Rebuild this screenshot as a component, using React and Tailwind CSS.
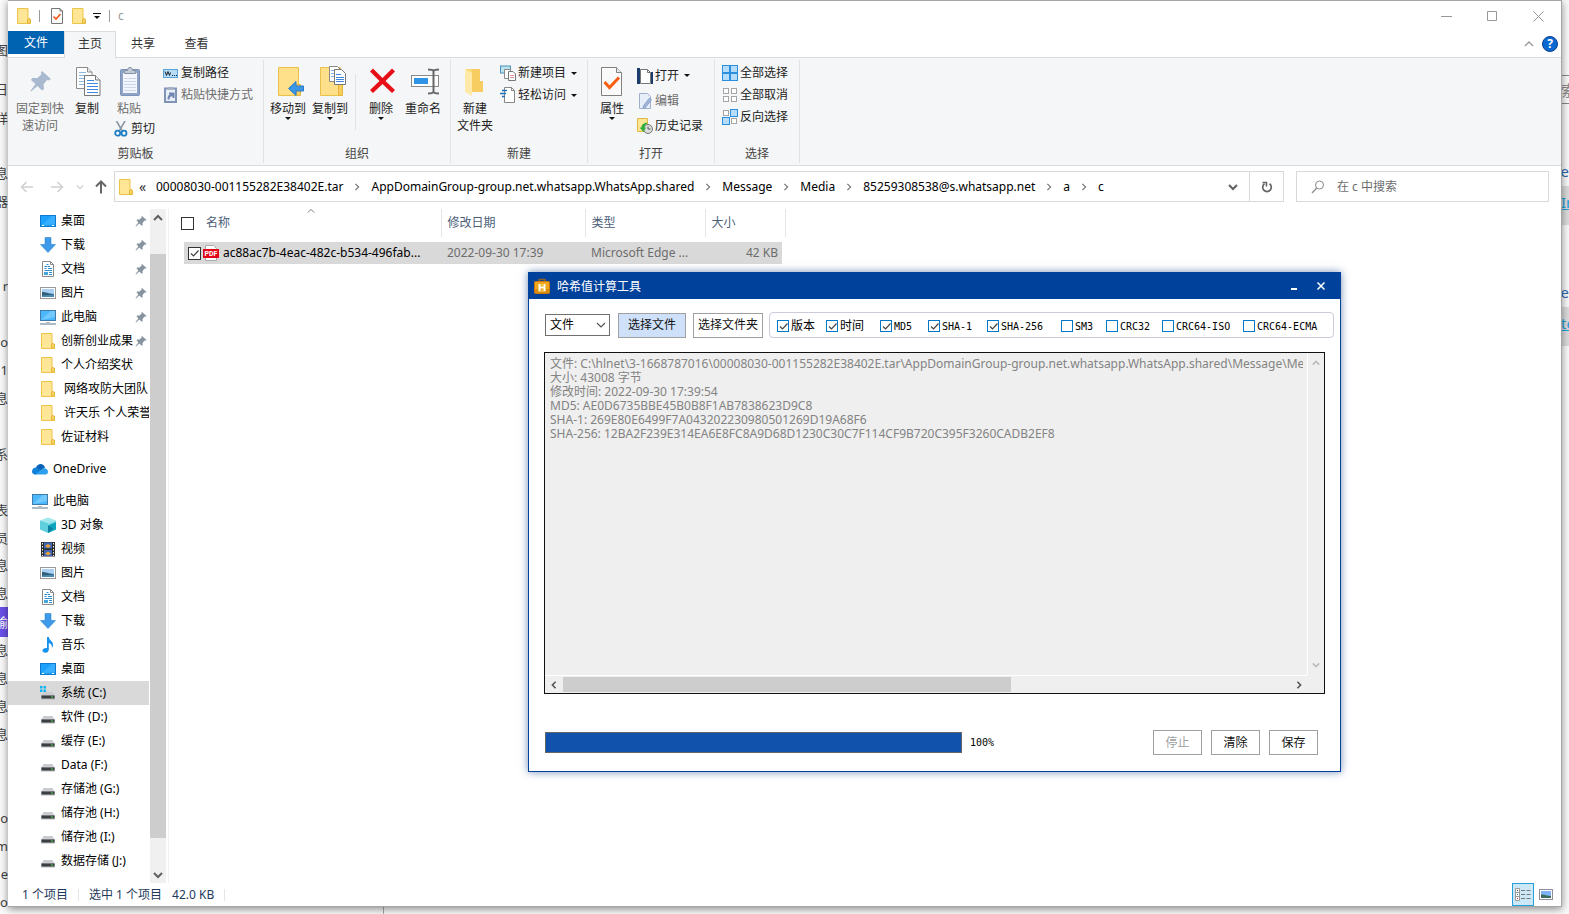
import React from "react";

/* ---------- icons ---------- */

const Folder = ({ className = "w-4 h-4" }) => (
  <svg className={className} viewBox="0 0 16 16">
    <path d="M1.5 .5h10.500v10.200h1c.8 0 1.500.5 1.500 1.200v3.600h-13z" fill="#ffe596" stroke="#ecc448" />
    <path d="M11.500 15.200v-3.600c0-.6.5-1 1.300-1s1.500.4 1.500 1.200v3.400z" fill="#fbd768" stroke="#e3b437" />
  </svg>
);
const DocCheck = ({ className = "w-4 h-4" }) => (
  <svg className={className} viewBox="0 0 16 16">
    <path d="M2.500 .5h8.500l2.500 2.500v12.500h-11z" fill="#fbfbfb" stroke="#777" />
    <path d="M11 .5v2.500h2.500" fill="none" stroke="#777" />
    <path d="M4.500 8.500l2.500 2.500 4.500-5" fill="none" stroke="#f25a1d" strokeWidth="1.700" />
  </svg>
);
const Chevron = ({ dir = "down", className = "w-2.5 h-2.5", color = "#606060", width = 2 }) => {
  const d = {
    down: "M1 3l4 4 4-4",
    up: "M1 7l4-4 4 4",
    right: "M3 1l4 4-4 4",
    left: "M7 1l-4 4 4 4",
  }[dir];
  return (
    <svg className={className} viewBox="0 0 10 10">
      <path d={d} fill="none" stroke={color} strokeWidth={width} />
    </svg>
  );
};
const Caret = () => (
  <svg className="h-[3px] w-[6px] shrink-0" viewBox="0 0 6 3">
    <path d="M0 0h6L3 3z" fill="#111" />
  </svg>
);
const PinBig = () => (
  <svg className="h-8 w-8" viewBox="-1 0 32 32">
    <path d="M17 5l9 8-2.500 1.500-1.500-.5-3.500 4.500.5 4.500-2 1.500-4.500-4.500-6.500 5.500-.5-.8 5-6.700-4.500-4 1.500-2.200 4.700.5 4.300-4-.8-1.300z" fill="#a9b9cf" />
  </svg>
);
const CopyBig = () => (
  <svg className="h-8 w-8" viewBox="-1 0 32 32">
    <path d="M4.500 1.500h11l4.500 4.500v16.500h-15.500z" fill="#fff" stroke="#8b8b8b" />
    <path d="M15.500 1.500v4.500h4.500" fill="#eee" stroke="#8b8b8b" />
    <path d="M7 6.500h7M7 9.500h10M7 12.500h5M7 15.500h5M7 18.500h5" stroke="#8cb6e6" />
    <path d="M12.500 9.500h11l4.500 4.500v15.500h-15.500z" fill="#fff" stroke="#777" />
    <path d="M23.500 9.500v4.500h4.500" fill="#eee" stroke="#777" />
    <path d="M15 14.500h7M15 17.500h11M15 20.500h11M15 23.500h11M15 26.500h11" stroke="#3f86dd" />
  </svg>
);
const PasteBig = () => (
  <svg className="h-8 w-8" viewBox="-1 0 32 32">
    <rect x="6.500" y="3.500" width="19" height="26" rx="1" fill="#8ea3c5" stroke="#7d93b8" />
    <rect x="9" y="7" width="14" height="20" fill="#f3f7fd" />
    <path d="M10 12.500h12M10 15.500h12M10 18.500h12M10 21.500h12M10 24.500h12" stroke="#cdd9ea" />
    <path d="M10.500 7.500v-3h3c0-2 1-3 2.500-3s2.500 1 2.500 3h3v3z" fill="#c2cad6" stroke="#8692a6" />
  </svg>
);
const Scissors = () => (
  <svg className="h-4 w-4" viewBox="0 0 16 16">
    <path d="M3.500 0l5.500 9.500M12 0l-5.500 9.500" stroke="#8795a3" strokeWidth="1.500" />
    <circle cx="4.700" cy="12.200" r="2.500" fill="none" stroke="#1e7fc4" strokeWidth="1.800" />
    <circle cx="11" cy="12.200" r="2.500" fill="none" stroke="#1e7fc4" strokeWidth="1.800" />
  </svg>
);
const PathIcon = () => (
  <svg className="h-4 w-4" viewBox="0 0 16 16">
    <rect x=".5" y="4.500" width="14" height="8" fill="#b7dcf6" stroke="#5ba4db" />
    <path d="M2 6.500l1.500 4 1.500-4 1.500 4 1-3" fill="none" stroke="#123" />
    <path d="M9 10.500h1M11 10.500h1M13 10.500h1" stroke="#123" />
  </svg>
);
const PasteLink = () => (
  <svg className="h-4 w-4" viewBox="0 0 16 16">
    <rect x="2" y="1.500" width="11" height="13.500" fill="#e9eff8" stroke="#8194b6" strokeWidth="2" />
    <rect x="4.500" y="0" width="6" height="3" fill="#a7b2c4" />
    <path d="M4.500 12.500c0-3.500 1-5 3-5H6V5.500h5.500V11H9.500V9.300C7.500 9.300 6.500 10 6.500 12.500z" fill="#6f87b3" />
  </svg>
);
const MoveTo = () => (
  <svg className="h-8 w-8" viewBox="-2 0 32 32">
    <path d="M4.500 1.500h20v28h-20z" fill="#ffe08a" stroke="#ecc14a" />
    <path d="M22.500 18.500h4v11h-4z" fill="#f7ce5d" stroke="#e4b53c" />
    <path d="M14.500 22.500l7.500-7v4.500h7.500v5h-7.500v4.500z" fill="#3c96e4" stroke="#2b7dc9" />
  </svg>
);
const CopyTo = () => (
  <svg className="h-8 w-8" viewBox="-2 0 32 32">
    <path d="M4.500 1.500h20v28h-20z" fill="#ffe08a" stroke="#ecc14a" />
    <path d="M22.500 17.500h4v12h-4z" fill="#f7ce5d" stroke="#e4b53c" />
    <path d="M13.500 .5h8l3 3v12h-11z" fill="#fff" stroke="#888" />
    <path d="M15 4.500h4M15 7.500h4M15 10.500h4" stroke="#7fb1ea" />
    <path d="M18.500 3.500h7l4 4v11h-11z" fill="#fff" stroke="#777" />
    <path d="M20 8.500h5M20 11.500h8M20 13.500h8M20 15.500h8" stroke="#3f86dd" />
  </svg>
);
const DeleteX = () => (
  <svg className="h-8 w-8" viewBox="-1 1 32 32">
    <path d="M4 6.500l3-3 9.500 9.500L26 3.500l3 3-9.500 9.500 9.500 9-3 3-9.500-9L7 28l-3-3 9.500-9z" fill="#e60f17" />
  </svg>
);
const Rename = () => (
  <svg className="h-8 w-8" viewBox="-1 0 32 32">
    <rect x="3.500" y="9.500" width="27" height="11" fill="#fff" stroke="#8a8a8a" />
    <rect x="6" y="12" width="14" height="6" fill="#2f93e6" />
    <path d="M20 3.500c3 0 4.500 0 5.500 1.500C26.500 3.500 28 3.500 31 3.500M20 27.500c3 0 4.500 0 5.500-1.500 1 1.500 2.500 1.500 5.500 1.500M25.500 5v21" fill="none" stroke="#666" strokeWidth="2" />
  </svg>
);
const NewFolder = () => (
  <svg className="h-8 w-8" viewBox="0 0 32 32">
    <path d="M7 3h14v12h3v11H13z" fill="#fbd873" />
    <path d="M13 3h8v12h3v11H13z" fill="#f7cd62" />
    <path d="M6 3l7 4v23l-7-4z" fill="#ffe9a8" />
  </svg>
);
const NewItem = () => (
  <svg className="h-4 w-4" viewBox="0 0 16 16">
    <rect x=".5" y="1" width="10" height="7" fill="#bde3ef" stroke="#4a8fb8" />
    <path d="M4.500 4.500h6v9h-6z" fill="#fff" stroke="#888" />
    <path d="M8.500 6.500h4.500l2.500 2.500v6.500h-7z" fill="#fff" stroke="#777" />
    <path d="M10 10.500h4M10 12.500h4" stroke="#e5939b" />
  </svg>
);
const EasyAccess = () => (
  <svg className="h-4 w-4" viewBox="0 0 16 16">
    <path d="M4.500 .5h7l3 3v12h-10z" fill="#fff" stroke="#888" />
    <path d="M11.500 .5v3h3" fill="none" stroke="#888" />
    <path d="M2 3.500h5M0 6.500h6M2 9.500h3" stroke="#1f6fb6" strokeWidth="1.300" />
  </svg>
);
const PropsBig = () => (
  <svg className="h-8 w-8" viewBox="1 0 32 32">
    <path d="M6.500 1.500h15l5 5v23h-20z" fill="#fafafa" stroke="#808080" />
    <path d="M21.500 1.500v5h5" fill="#e9e9e9" stroke="#808080" />
    <path d="M9.500 16l5 5.500L24 11.500" fill="none" stroke="#fa5c10" strokeWidth="3" />
  </svg>
);
const OpenIcon = () => (
  <svg className="h-4 w-4" viewBox="0 0 16 16">
    <path d="M0 0h3v16H0zM14 4h2v12h-2z" fill="#1d3c6e" />
    <path d="M3.500 1.500h7l3 3v11h-10z" fill="#fff" stroke="#777" />
    <path d="M10.500 1.500v3h3" fill="none" stroke="#777" />
  </svg>
);
const EditIcon = () => (
  <svg className="h-4 w-4" viewBox="0 0 16 16">
    <path d="M2.500 .5h8l3 3v12h-11z" fill="#e6eefa" stroke="#a0b0cc" />
    <path d="M12.500 5l2 1.500-6 8-2.500 1 .5-2.800z" fill="#9db4d6" stroke="#8ca5cb" />
  </svg>
);
const HistoryIcon = () => (
  <svg className="h-4 w-4" viewBox="0 0 16 16">
    <path d="M.5 .5h10v13H.5z" fill="#ffe596" stroke="#e2b93f" />
    <circle cx="11" cy="11" r="4.500" fill="#dcdcdc" stroke="#777" />
    <path d="M11 8.500v2.500h2.500" fill="none" stroke="#555" />
    <path d="M10 4.500C6 5 4.500 7 4.500 9.500H2.500l4 4.500 2.500-4.500H7.500c0-2 .5-3 2.500-3.500z" fill="#2fae3e" />
  </svg>
);
const SelectIcon = ({ on }) => (
  <svg className="h-4 w-4" viewBox="0 0 16 16">
    {[[0, 0], [1, 0], [0, 1], [1, 1]].map(([x, y], i) =>
      on[i] ? (
        <rect key={i} x={x * 8 + 0.5} y={y * 8 + 0.5} width="7" height="7" fill="#b5dcfa" stroke="#2b8fe0" />
      ) : (
        <rect key={i} x={x * 8 + 1.5} y={y * 8 + 1.5} width="5" height="5" fill="#fff" stroke="#a5a5a5" />
      )
    )}
  </svg>
);
const Desktop = () => (
  <svg className="h-4 w-4" viewBox="0 0 16 16">
    <rect x=".5" y="2.500" width="15" height="11" fill="#1ba1fb" stroke="#0d7ad0" />
    <path d="M1 13L12 3h3v8z" fill="#45b5ff" opacity=".7" />
    <path d="M2 12.500h2M12 12.500h2" stroke="#fff" />
  </svg>
);
const Download = () => (
  <svg className="h-4 w-4" viewBox="0 0 16 16">
    <path d="M5 .5h6v7h4.500L8 15.500.5 7.500H5z" fill="#3d9bea" stroke="#2d83cf" strokeWidth=".6" />
  </svg>
);
const Doc = () => (
  <svg className="h-4 w-4" viewBox="0 0 16 16">
    <path d="M2.500 .5h8l3 3v12h-11z" fill="#fff" stroke="#8a8a8a" />
    <path d="M10.500 .5v3h3" fill="none" stroke="#8a8a8a" />
    <path d="M4.500 7.500h2M6.500 3.500h2M4.500 5.500h3M8 7.500h4M8 5.500h2M4.500 9.500h7.500M9 11.500h3M9 13.500h3" stroke="#2f8ccf" />
    <path d="M4 11h4v3H4z" fill="#46a6de" />
  </svg>
);
const Picture = () => (
  <svg className="h-4 w-4" viewBox="0 0 16 16">
    <rect x=".5" y="2.500" width="15" height="11" fill="#fff" stroke="#9a9a9a" />
    <rect x="2" y="4" width="12" height="8" fill="#a9d1f5" />
    <path d="M2 7c4 0 6 1.500 12 2v3H2z" fill="#2f6078" />
    <path d="M2 10.500l12-1V12H2z" fill="#4c88b4" />
  </svg>
);
const Monitor = () => (
  <svg className="h-4 w-4" viewBox="0 0 16 16">
    <rect x=".5" y="1.500" width="15" height="10" fill="#4cb8fb" stroke="#3f7ca8" />
    <path d="M1 11L11 2h4v6z" fill="#8ad3ff" opacity=".6" />
    <path d="M6 13.500h4" stroke="#b3c5d1" />
    <path d="M0 15h16" stroke="#7d95a6" strokeWidth="1.300" />
  </svg>
);
const OneDrive = () => (
  <svg className="h-4 w-4" viewBox="0 0 16 16">
    <path d="M4 6.500C5 4 7 2.800 9 3c2.300.2 3.500 1.700 4 3.500L8 10z" fill="#0a63b8" />
    <path d="M0 10.500C0 8 2 6.300 4.500 6.500L10 10l-6 3.500H3C1.200 13.300 0 12.200 0 10.500z" fill="#1180d8" />
    <path d="M3 13.500l8-6c2.500-.8 5 1 5 3.300 0 1.500-1 2.700-2.700 2.700z" fill="#2ba0ee" />
  </svg>
);
const Cube = () => (
  <svg className="h-4 w-4" viewBox="0 0 16 16">
    <path d="M0 3.500L8 .5l8 3-8 2.500z" fill="#9fe7ee" />
    <path d="M0 3.500L8 6v10l-8-3.500z" fill="#5fcfdd" />
    <path d="M16 3.500L8 6v10l8-3.500z" fill="#7fdbe6" />
    <path d="M8 8.500l8-3.500v7.500L8 16z" fill="#0fa3bd" />
    <path d="M8 8.500l5 3L8 16z" fill="#0a7f9e" />
  </svg>
);
const Film = () => (
  <svg className="h-4 w-4" viewBox="0 0 16 16">
    <rect x="1" y="1" width="14" height="14.500" fill="#2b2b2b" />
    <rect x="4" y="1.500" width="8" height="6" fill="#4166b5" />
    <rect x="4" y="9" width="8" height="6" fill="#4166b5" />
    <path d="M5 5l3-2 3 2-3 2zM5 12.500l3-2 3 2-3 2z" fill="#e6a33a" />
    <path d="M2.500 2v13M13.500 2v13" stroke="#eee" strokeDasharray="1.500 1.500" />
  </svg>
);
const Music = () => (
  <svg className="h-4 w-4" viewBox="0 0 16 16">
    <path d="M7 0h1.800c.3 3.500 4.700 4 4.200 8.500-.1 1-.6 1.900-1.200 2.600.5-2.600-.6-4.300-3-5.100v6.500c0 2-1.500 3.300-3.500 3.300-1.700 0-2.800-.9-2.800-2.200C2.500 12 4.200 10.800 7 11z" fill="#1592f0" />
  </svg>
);
const Drive = ({ win }) => (
  <svg className="h-4 w-4" viewBox="0 0 16 16">
    <path d="M3.500 7h9l2 3.500h-13z" fill="#c9ccd0" />
    <rect x="1" y="10" width="14" height="4.500" fill="#bbb" />
    <rect x="1.500" y="10.500" width="13" height="3" fill="#3c3f42" />
    <rect x="11" y="11.500" width="2" height="1" fill="#52e058" />
    {win && <path d="M0 1h2.500v2.500H0zM3.500 1H6v2.500H3.500zM0 4.500h2.500V7H0zM3.500 4.500H6V7H3.500z" fill="#12b3f2" />}
  </svg>
);
const Pin = () => (
  <svg className="h-3 w-3 shrink-0" viewBox="0 0 12 12">
    <path d="M7 1l4.500 4-1 .8-.9-.2L7.500 8l.2 2-1 .8L4.300 8.500 1 11.500l-.5-.4 2.800-3.600L1.500 5.300l.7-.9 2.200.2L6.700 2.500l-.3-.7z" fill="#8794a0" />
  </svg>
);
const PdfIcon = () => (
  <svg className="h-4 w-4 shrink-0" viewBox="0 0 16 16">
    <path d="M2.500 .5h8l3 3v12h-11z" fill="#fff" stroke="#aaa" />
    <rect x="0" y="4" width="16" height="9" fill="#e2061a" />
    <text x="8" y="11" textAnchor="middle" fontSize="7" fontWeight="700" fill="#fff" fontFamily="Roboto, sans-serif">PDF</text>
  </svg>
);
const HashLogo = () => (
  <svg className="h-4 w-4" viewBox="0 0 16 16">
    <path d="M5 4V1.500h6V4" fill="none" stroke="#8a6226" strokeWidth="1.500" />
    <rect x=".5" y="3.500" width="15" height="12" rx="1" fill="#f0a51c" stroke="#c9790c" />
    <rect x="1" y="11" width="14" height="4" fill="#d98a10" />
    <rect x="4" y="6" width="8" height="8" fill="#f8cf62" opacity=".6" />
    <path d="M5.500 6v7M10.500 6v7M5.500 9.500h5" stroke="#fff" strokeWidth="1.600" />
  </svg>
);

/* ---------- shared controls ---------- */

const Big = ({ icon, lines, muted, caret, className }) => (
  <button className={`flex flex-col items-center ${muted ? "text-[#6d6d6d]" : "text-[#222]"} ${className}`}>
    {icon}
    <span className="flex flex-col items-center whitespace-nowrap pt-0.5 leading-[17px]">
      {lines.map((l) => (
        <span key={l}>{l}</span>
      ))}
    </span>
    {caret && <Caret />}
  </button>
);
const Small = ({ icon, label, muted, caret, className = "h-[22px]" }) => (
  <button className={`flex items-center gap-0.5 whitespace-nowrap ${muted ? "text-[#6d6d6d]" : "text-[#222]"} ${className}`}>
    {icon}
    <span>{label}</span>
    {caret && <span className="pl-[3px]"><Caret /></span>}
  </button>
);
const Group = ({ label, className, children }) => (
  <section className={`flex ${className}`}>
    <div className="flex flex-1 flex-col">
      <div className="flex flex-1 pt-1">{children}</div>
      <div className="pb-[3px] text-center leading-4 text-[#444]">{label}</div>
    </div>
    <div className="my-0.5 w-px bg-[#e1e2e3]" />
  </section>
);
const Tick = ({ id, label, checked, tone }) => (
  <span className="grid shrink-0 place-items-center [&>*]:[grid-area:1/1]">
    <input
      id={id}
      type="checkbox"
      aria-label={label}
      defaultChecked={checked}
      className={`peer appearance-none border bg-white ${tone === "blue" ? "h-3 w-3 border-[#0078c8]" : "h-[13px] w-[13px] border-[#333]"}`}
    />
    <svg className="pointer-events-none invisible h-[11px] w-[11px] peer-checked:visible" viewBox="0 0 11 11">
      <path d="M2 5.500l2.500 2.500L9.500 2.500" fill="none" stroke="#444" strokeWidth="1.200" />
    </svg>
  </span>
);

/* ---------- data ---------- */

const quick = [
  [<Desktop />, "桌面", true],
  [<Download />, "下载", true],
  [<Doc />, "文档", true],
  [<Picture />, "图片", true],
  [<Monitor />, "此电脑", true],
  [<Folder />, "创新创业成果", true],
  [<Folder />, "个人介绍奖状"],
  [<Folder />, "\u00a0网络攻防大团队"],
  [<Folder />, "\u00a0许天乐 个人荣誉"],
  [<Folder />, "佐证材料"],
];
const thisPc = [
  [<Cube />, "3D 对象"],
  [<Film />, "视频"],
  [<Picture />, "图片"],
  [<Doc />, "文档"],
  [<Download />, "下载"],
  [<Music />, "音乐"],
  [<Desktop />, "桌面"],
  [<Drive win />, "系统 (C:)", true],
  [<Drive />, "软件 (D:)"],
  [<Drive />, "缓存 (E:)"],
  [<Drive />, "Data (F:)"],
  [<Drive />, "存储池 (G:)"],
  [<Drive />, "储存池 (H:)"],
  [<Drive />, "储存池 (I:)"],
  [<Drive />, "数据存储 (J:)"],
];
const crumbs = [
  "00008030-001155282E38402E.tar",
  "AppDomainGroup-group.net.whatsapp.WhatsApp.shared",
  "Message",
  "Media",
  "85259308538@s.whatsapp.net",
  "a",
  "c",
];
const hashes = [
  ["版本", true, "w-[49px]"],
  ["时间", true, "w-[54px]"],
  ["MD5", true, "w-[48px]"],
  ["SHA-1", true, "w-[59px]"],
  ["SHA-256", true, "w-[74px]"],
  ["SM3", false, "w-[45px]"],
  ["CRC32", false, "w-[56px]"],
  ["CRC64-ISO", false, "w-[81px]"],
  ["CRC64-ECMA", false, "w-[80px]"],
];
const log = [
  "文件: C:\\hlnet\\3-1668787016\\00008030-001155282E38402E.tar\\AppDomainGroup-group.net.whatsapp.WhatsApp.shared\\Message\\Media\\85259308538@s.whatsapp.net\\a\\c",
  "大小: 43008 字节",
  "修改时间: 2022-09-30 17:39:54",
  "MD5: AE0D6735BBE45B0B8F1AB7838623D9C8",
  "SHA-1: 269E80E6499F7A043202230980501269D19A68F6",
  "SHA-256: 12BA2F239E314EA6E8FC8A9D68D1230C30C7F114CF9B720C395F3260CADB2EF8",
].join("\n");
const leftEdge = [
  [42, "图"], [81, "日"], [110, "详"], [165, "息"], [193, "器"], [278, "r"], [334, "o"], [362, "1"],
  [390, "信息"], [446, "系"], [502, "表"], [530, "成员"], [557, "消息"], [585, "消息"], [642, "消息"],
  [670, "消息"], [698, "消息"], [726, "消息"], [810, "o"], [838, "m"], [866, "e"],
];

/* ---------- page parts ---------- */

const Backdrop = () => (
  <div className="absolute inset-0 overflow-hidden bg-[#fafafa] text-[13px] leading-4 text-[#444]" aria-hidden="true">
    <div className="absolute inset-y-0 left-0 w-2 overflow-hidden">
      <div className="absolute inset-x-0 top-[607px] flex h-[30px] items-center justify-end bg-[#6a50e8] text-white">输</div>
      {leftEdge.map(([y, t]) => (
        <div key={y} className="absolute right-0 whitespace-nowrap" style={{ top: y }}>{t}</div>
      ))}
    </div>
    <div className="absolute inset-y-0 right-0 w-2 overflow-hidden whitespace-nowrap text-[15px]">
      <div className="absolute top-[75px] h-[29px] w-full border-y border-[#888] pt-1.5 text-[#888]">索</div>
      <div className="absolute right-0 top-[163px] text-[#2f68b4]">ne</div>
      <div className="absolute top-[186px] h-[39px] w-full bg-[#dcdcdc] pt-2 text-[#17a0dd] underline">In</div>
      <div className="absolute right-0 top-[284px] text-[#2f68b4]">ne</div>
      <div className="absolute top-[307px] h-[39px] w-full bg-[#dcdcdc] pt-2 text-[#17a0dd] underline">te</div>
    </div>
    <div className="absolute bottom-0 left-0 flex h-5 items-start gap-9">
      <span>obile</span>
      <span>992</span>
    </div>
    <div className="absolute bottom-0 left-[383px] h-2 w-px bg-[#aaa]" />
  </div>
);

const TitleBar = () => (
  <header className="flex h-[30px] items-center">
    <div className="flex flex-1 items-center">
      <Folder className="ml-2 h-4 w-4" />
      <span className="ml-[7px] h-3 w-px bg-[#999]" />
      <DocCheck className="ml-[9px] h-4 w-4" />
      <Folder className="ml-1.5 h-4 w-4" />
      <svg className="ml-1.5 h-2 w-2" viewBox="0 0 8 8"><path d="M0 1.500h8" stroke="#111" /><path d="M1 4h6L4 7z" fill="#111" /></svg>
      <span className="ml-2 h-3 w-px bg-[#999]" />
      <span className="ml-2 text-[#999]">c</span>
    </div>
    <button className="flex h-full w-[46px] items-center justify-center" aria-label="最小化">
      <svg className="h-[11px] w-[11px]" viewBox="0 0 11 11"><path d="M0 5.500h11" stroke="#999" /></svg>
    </button>
    <button className="flex h-full w-[46px] items-center justify-center" aria-label="最大化">
      <svg className="h-[11px] w-[11px]" viewBox="0 0 11 11"><path d="M.5 .5h9v9H.5z" fill="none" stroke="#999" /></svg>
    </button>
    <button className="flex h-full w-[46px] items-center justify-center" aria-label="关闭">
      <svg className="h-[11px] w-[11px]" viewBox="0 0 11 11"><path d="M.5 .5l10 10M10.500 .5l-10 10" stroke="#999" /></svg>
    </button>
  </header>
);

const TabRow = () => (
  <nav className="flex h-[27px] items-start border-b border-[#dadbdc] text-[#333]">
    <button className="h-[23px] w-14 bg-[#0063b1] text-white">文件</button>
    <button className="-mb-px h-[27px] w-[52px] border-x border-t border-[#dadbdc] bg-[#f5f6f7] pb-0.5">主页</button>
    <button className="h-[27px] w-[54px] pb-0.5">共享</button>
    <button className="h-[27px] w-[53px] pb-0.5">查看</button>
    <div className="flex h-[26px] flex-1 items-center justify-end gap-2 pr-[3px]">
      <button aria-label="折叠功能区"><Chevron dir="up" color="#999" width={1.3} /></button>
      <button aria-label="帮助" className="flex h-4 w-4 items-center justify-center rounded-full border border-[#0a3f8f] bg-[#0a68d0] text-[12px] font-bold leading-none text-white">?</button>
    </div>
  </nav>
);

const Ribbon = () => (
  <div className="flex h-[108px] border-b border-[#dadbdc] bg-[#f5f6f7]">
    <Group label="剪贴板" className="w-64">
      <Big className="w-16 pt-1" icon={<PinBig />} lines={["固定到快", "速访问"]} muted />
      <Big className="w-[30px] pt-1" icon={<CopyBig />} lines={["复制"]} />
      <div className="flex w-[54px] flex-col">
        <Big className="w-full pt-1" icon={<PasteBig />} lines={["粘贴"]} muted />
        <Small className="mr-px h-6 self-end" icon={<Scissors />} label="剪切" />
      </div>
      <div className="flex flex-col pl-[7px]">
        <Small icon={<PathIcon />} label="复制路径" />
        <Small icon={<PasteLink />} label="粘贴快捷方式" muted />
      </div>
    </Group>
    <Group label="组织" className="w-[187px]">
      <Big className="ml-[3px] w-[42px] pt-1" icon={<MoveTo />} lines={["移动到"]} caret />
      <Big className="w-[42px] pt-1" icon={<CopyTo />} lines={["复制到"]} caret />
      <div className="mx-1 mt-3 h-14 w-px bg-[#e1e2e3]" />
      <Big className="w-[42px] pt-1" icon={<DeleteX />} lines={["删除"]} caret />
      <Big className="w-[42px] pt-1" icon={<Rename />} lines={["重命名"]} />
    </Group>
    <Group label="新建" className="w-[137px]">
      <Big className="ml-1 w-10 pt-1" icon={<NewFolder />} lines={["新建", "文件夹"]} />
      <div className="flex flex-col pl-[5px]">
        <Small icon={<NewItem />} label="新建项目" caret />
        <Small icon={<EasyAccess />} label="轻松访问" caret />
      </div>
    </Group>
    <Group label="打开" className="w-[127px]">
      <Big className="ml-1 w-10 pt-1" icon={<PropsBig />} lines={["属性"]} caret />
      <div className="flex flex-col pl-[5px] pt-px">
        <Small className="h-[25px]" icon={<OpenIcon />} label="打开" caret />
        <Small className="h-[25px]" icon={<EditIcon />} label="编辑" muted />
        <Small className="h-[25px]" icon={<HistoryIcon />} label="历史记录" />
      </div>
    </Group>
    <Group label="选择" className="w-[85px]">
      <div className="flex flex-col pl-[7px]">
        <Small icon={<SelectIcon on={[1, 1, 1, 1]} />} label="全部选择" />
        <Small icon={<SelectIcon on={[0, 0, 0, 0]} />} label="全部取消" />
        <Small icon={<SelectIcon on={[0, 1, 1, 0]} />} label="反向选择" />
      </div>
    </Group>
  </div>
);

const Arrow = ({ d, color, width = 1.6 }) => (
  <svg className="h-3.5 w-3.5" viewBox="0 0 14 14">
    <path d={d} fill="none" stroke={color} strokeWidth={width} />
  </svg>
);

const AddressRow = () => (
  <div className="flex h-[41px] items-center pr-3">
    <div className="flex w-[106px] items-center pl-3">
      <button aria-label="后退"><Arrow d="M13 7H1.500M6.500 2l-5 5 5 5" color="#d0d0d0" /></button>
      <button aria-label="前进" className="ml-4"><Arrow d="M1 7h11.500M7.500 2l5 5-5 5" color="#d0d0d0" /></button>
      <button aria-label="最近位置" className="ml-3"><Chevron className="h-2 w-2" color="#ccc" width={1.5} /></button>
      <button aria-label="上移" className="ml-2.5"><Arrow d="M7 13.500V1.500M2 6.500l5-5 5 5" color="#666" width={2} /></button>
    </div>
    <div className="flex h-[31px] flex-1 items-center border border-[#d9d9d9]">
      <Folder className="ml-[3px] h-4 w-4" />
      <span className="ml-[5px] w-[17px] text-[14px] leading-none text-[#333]">«</span>
      <ol className="flex flex-1 items-center text-black">
        {crumbs.map((c, i) => (
          <li key={c} className="flex items-center">
            {i > 0 && <span className="flex w-7 justify-center"><Chevron dir="right" className="h-2 w-2" color="#777" width={1.5} /></span>}
            <a href="#" className="text-black">{c}</a>
          </li>
        ))}
      </ol>
      <button aria-label="历史" className="px-[11px]"><Chevron /></button>
      <button aria-label="刷新" className="flex h-full w-[34px] items-center justify-center border-l border-[#d9d9d9]">
        <svg className="h-3 w-3" viewBox="0 0 12 12">
          <path d="M3.500 2.800A4.300 4.300 0 1 0 8.500 2.800" fill="none" stroke="#666" strokeWidth="1.700" />
          <path d="M1.500 1.500h4v4" fill="none" stroke="#666" strokeWidth="1.600" />
        </svg>
      </button>
    </div>
    <label className="ml-3 flex h-[31px] w-[253px] items-center gap-3 border border-[#d9d9d9] pl-3.5">
      <svg className="h-3.5 w-3.5 shrink-0" viewBox="0 0 14 14">
        <circle cx="8.500" cy="5" r="4" fill="none" stroke="#8a8a8a" />
        <path d="M5.700 8L1 13" stroke="#8a8a8a" strokeWidth="1.200" />
      </svg>
      <input type="search" aria-label="搜索" placeholder="在 c 中搜索" className="w-full bg-transparent outline-none placeholder:text-[#6d6d6d]" />
    </label>
  </div>
);

const NavItem = ({ icon, label, pinned, active, indent = "pl-8" }) => (
  <li>
    <a href="#" className={`flex h-6 items-center gap-[5px] overflow-hidden pr-0.5 whitespace-nowrap text-black ${indent} ${active ? "bg-[#d9d9d9]" : ""}`}>
      <span className="shrink-0">{icon}</span>
      <span className="min-w-0 flex-1">{label}</span>
      {pinned && <Pin />}
    </a>
  </li>
);

const Sidebar = () => (
  <aside className="flex w-[161px] shrink-0 border-r border-[#f0f0f0]">
    <div className="w-[141px] overflow-hidden">
      <ul>
        {quick.map(([icon, label, pinned]) => (
          <NavItem key={label} icon={icon} label={label} pinned={pinned} />
        ))}
      </ul>
      <ul className="py-2"><NavItem icon={<OneDrive />} label="OneDrive" indent="pl-6" /></ul>
      <ul>
        <NavItem icon={<Monitor />} label="此电脑" indent="pl-6" />
        {thisPc.map(([icon, label, active]) => (
          <NavItem key={label} icon={icon} label={label} active={active} />
        ))}
      </ul>
    </div>
    <div className="ml-px flex w-4 flex-col items-center bg-[#f0f0f0]">
      <button aria-label="向上滚动" className="h-[45px] pb-7"><Chevron dir="up" /></button>
      <div className="w-full flex-1 bg-[#cdcdcd]" />
      <button aria-label="向下滚动" className="h-[45px] pt-7"><Chevron /></button>
    </div>
  </aside>
);

const Files = () => (
  <main className="flex-1">
    <table className="w-[616px] table-fixed border-collapse text-left">
      <colgroup>
        <col className="w-[272px]" />
        <col className="w-36" />
        <col className="w-[120px]" />
        <col className="w-20" />
      </colgroup>
      <thead>
        <tr className="h-7 text-[#4c607a]">
          <th className="border-r border-[#e5e5e5] font-normal">
            <div className="flex items-center pl-3">
              <Tick label="全选" />
              <span className="flex-1 pl-3">名称</span>
              <span className="-mt-6 mr-[126px]"><Chevron dir="up" className="h-2 w-2" color="#777" width={1.2} /></span>
            </div>
          </th>
          <th className="border-r border-[#e5e5e5] pl-1.5 font-normal">修改日期</th>
          <th className="border-r border-[#e5e5e5] pl-1.5 font-normal">类型</th>
          <th className="border-r border-[#e5e5e5] pl-1.5 font-normal">大小</th>
        </tr>
      </thead>
      <tbody>
        <tr className="text-[#6d6d6d]">
          <td className="pt-[5px]">
            <div className="ml-[15px] flex h-[22px] items-center bg-[#d9d9d9] pl-1 whitespace-nowrap text-black">
              <Tick label="选择文件" checked />
              <span className="w-0.5" />
              <PdfIcon />
              <span className="pl-1">ac88ac7b-4eac-482c-b534-496fab...</span>
            </div>
          </td>
          <td className="pt-[5px]"><div className="flex h-[22px] items-center bg-[#d9d9d9] pl-1.5">2022-09-30 17:39</div></td>
          <td className="pt-[5px]"><div className="flex h-[22px] items-center bg-[#d9d9d9] pl-1.5 whitespace-nowrap">Microsoft Edge ...</div></td>
          <td className="pt-[5px]"><div className="mr-[3px] flex h-[22px] items-center justify-end bg-[#d9d9d9] pr-1">42 KB</div></td>
        </tr>
      </tbody>
    </table>
  </main>
);

const StatusBar = () => (
  <footer className="flex h-[23px] shrink-0 items-center pl-3.5 text-[#1e395b]">
    <span>1 个项目</span>
    <span className="mx-2.5 h-3 w-px bg-[#e5e5e5]" />
    <span>选中 1 个项目</span>
    <span className="pl-2.5">42.0 KB</span>
    <span className="ml-2.5 h-3 w-px bg-[#e5e5e5]" />
    <div className="flex flex-1 items-center justify-end gap-1 pr-[7px]">
      <button aria-label="详细信息" className="flex h-[23px] w-[22px] items-center justify-center border border-[#26a0da] bg-[#cce8f6]">
        <svg className="h-4 w-4" viewBox="0 0 16 16">
          <path d="M.5 1.500h4v12h-4zM.5 5.500h4M.5 9.500h4" fill="#fff" stroke="#999" />
          <path d="M6 3.500h4M11.500 3.500h4M6 7.500h4M11.500 7.500h4M6 11.500h4M11.500 11.500h4" stroke="#777" />
          <path d="M2 3h1v1H2z" fill="#333" /><path d="M2 7h1v1H2z" fill="#28c" /><path d="M2 11h1v1H2z" fill="#d22" />
        </svg>
      </button>
      <button aria-label="大图标">
        <svg className="h-4 w-4" viewBox="0 0 16 16">
          <rect x="1.500" y="2.500" width="13" height="10" fill="#fff" stroke="#8f8f9a" />
          <rect x="3" y="4" width="10" height="7" fill="#7fb4f7" />
          <path d="M3 7.500c3-.5 5 1 10 1.500v2H3z" fill="#3c6b5c" />
        </svg>
      </button>
    </div>
  </footer>
);

const flatButton = "h-[25px] border border-[#a0a0a0]";

const HashDialog = () => (
  <div role="dialog" aria-label="哈希值计算工具" className="absolute left-[528px] top-[272px] flex w-[813px] flex-col border border-[#00419c] bg-white text-[#111] shadow-[0_0_8px_rgba(0,50,120,0.55)]">
    <div className="flex h-[26px] items-center bg-[#00419c] pl-[5px] text-white">
      <HashLogo />
      <span className="flex-1 pl-[7px] pt-0.5">哈希值计算工具</span>
      <button aria-label="最小化" className="flex w-[27px] justify-center pt-1.5"><span className="h-0.5 w-1.5 bg-white" /></button>
      <button aria-label="关闭" className="flex w-[27px] justify-center">
        <svg className="h-2 w-2" viewBox="0 0 8 8"><path d="M.5 .5l7 7M7.500 .5l-7 7" stroke="#fff" strokeWidth="1.500" /></svg>
      </button>
      <span className="w-1.5" />
    </div>
    <div className="flex items-center pl-4 pr-1.5 pt-[13px]">
      <div className="grid w-[65px] items-center [&>*]:[grid-area:1/1]">
        <select aria-label="类型" className="h-[22px] w-full appearance-none border border-[#707070] bg-white pl-1 text-black">
          <option>文件</option>
        </select>
        <Chevron className="pointer-events-none mr-1 h-2.5 w-2.5 justify-self-end" color="#555" width={1.2} />
      </div>
      <button className={`ml-2 w-[68px] bg-[#cfe1fa] ${flatButton}`}>选择文件</button>
      <button className={`ml-[7px] w-[70px] whitespace-nowrap bg-white ${flatButton}`}>选择文件夹</button>
      <fieldset className="ml-1.5 flex h-[26px] flex-1 items-center rounded border border-[#cccbdc] pl-[7px] pt-0.5 text-black">
        {hashes.map(([name, on, w], i) => (
          <label key={name} htmlFor={`hash-${i}`} className={`flex items-center gap-0.5 whitespace-nowrap ${w}`}>
            <Tick id={`hash-${i}`} label={name} checked={on} tone="blue" />
            <span className={i < 2 ? "" : "font-['DejaVu_Sans_Mono',monospace] text-[10px]"}>{name}</span>
          </label>
        ))}
      </fieldset>
    </div>
    <div className="mx-[15px] mt-[14px] flex h-[342px] flex-col border border-[#111] bg-[#efefef]">
      <div className="flex min-h-0 flex-1">
        <textarea
          readOnly
          wrap="off"
          aria-label="计算结果"
          defaultValue={log}
          className="min-w-0 flex-1 resize-none overflow-hidden bg-transparent pl-[5px] pt-1 leading-[14px] text-[#838383] outline-none"
        />
        <div className="ml-1 flex w-[17px] flex-col items-center justify-between border-l border-white py-1.5">
          <Chevron dir="up" className="h-2 w-2" color="#bbb" />
          <Chevron className="h-2 w-2" color="#bbb" />
        </div>
      </div>
      <div className="mr-[17px] flex h-[18px] items-center border-t border-white">
        <span className="flex w-[18px] justify-center"><Chevron dir="left" className="h-2 w-2" color="#555" /></span>
        <span className="h-[15px] w-[448px] bg-[#cdcdcd]" />
        <span className="flex flex-1 justify-end pr-1"><Chevron dir="right" className="h-2 w-2" color="#555" /></span>
      </div>
    </div>
    <div className="flex items-center pb-4 pl-4 pr-[22px] pt-9">
      <div role="progressbar" aria-valuenow={100} aria-label="进度" className="h-[21px] w-[417px] border border-[#666] bg-[#1152ad]" />
      <span className="flex-1 pl-2 font-['DejaVu_Sans_Mono',monospace] text-[10px] text-black">100%</span>
      <div className="flex gap-[9px]">
        <button disabled className={`w-[49px] text-[#a0a0a0] ${flatButton}`}>停止</button>
        <button className={`w-[49px] ${flatButton}`}>清除</button>
        <button className={`w-[49px] ${flatButton}`}>保存</button>
      </div>
    </div>
  </div>
);

export default function App() {
  return (
    <div className="relative h-screen overflow-hidden font-['Noto_Sans','Noto_Sans_CJK_SC',sans-serif] text-[12px]">
      <Backdrop />
      <div className="relative flex h-full pb-[7px] pl-2 pr-[7px]">
        <div className="flex min-w-0 flex-1 flex-col border-b border-r border-t border-[#a6a6a6] bg-white shadow-[0_2px_8px_rgba(0,0,0,0.45)]">
          <TitleBar />
          <TabRow />
          <Ribbon />
          <AddressRow />
          <div className="flex min-h-0 flex-1 pt-0.5">
            <Sidebar />
            <Files />
          </div>
          <StatusBar />
        </div>
      </div>
      <HashDialog />
    </div>
  );
}
